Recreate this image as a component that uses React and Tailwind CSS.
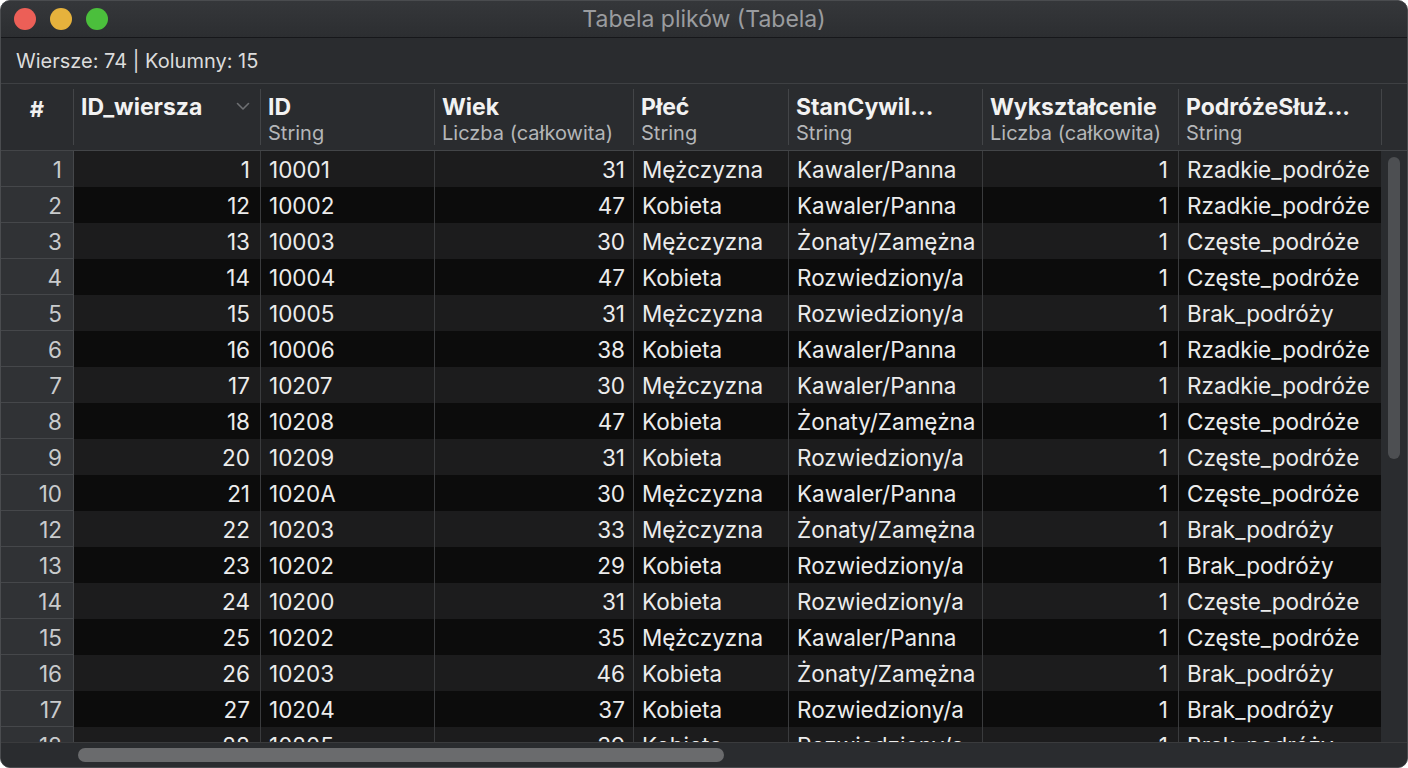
import React from "react";

const rows = [
  ["1", "1", "10001", "31", "Mężczyzna", "Kawaler/Panna", "1", "Rzadkie_podróże"],
  ["2", "12", "10002", "47", "Kobieta", "Kawaler/Panna", "1", "Rzadkie_podróże"],
  ["3", "13", "10003", "30", "Mężczyzna", "Żonaty/Zamężna", "1", "Częste_podróże"],
  ["4", "14", "10004", "47", "Kobieta", "Rozwiedziony/a", "1", "Częste_podróże"],
  ["5", "15", "10005", "31", "Mężczyzna", "Rozwiedziony/a", "1", "Brak_podróży"],
  ["6", "16", "10006", "38", "Kobieta", "Kawaler/Panna", "1", "Rzadkie_podróże"],
  ["7", "17", "10207", "30", "Mężczyzna", "Kawaler/Panna", "1", "Rzadkie_podróże"],
  ["8", "18", "10208", "47", "Kobieta", "Żonaty/Zamężna", "1", "Częste_podróże"],
  ["9", "20", "10209", "31", "Kobieta", "Rozwiedziony/a", "1", "Częste_podróże"],
  ["10", "21", "1020A", "30", "Mężczyzna", "Kawaler/Panna", "1", "Częste_podróże"],
  ["12", "22", "10203", "33", "Mężczyzna", "Żonaty/Zamężna", "1", "Brak_podróży"],
  ["13", "23", "10202", "29", "Kobieta", "Rozwiedziony/a", "1", "Brak_podróży"],
  ["14", "24", "10200", "31", "Kobieta", "Rozwiedziony/a", "1", "Częste_podróże"],
  ["15", "25", "10202", "35", "Mężczyzna", "Kawaler/Panna", "1", "Częste_podróże"],
  ["16", "26", "10203", "46", "Kobieta", "Żonaty/Zamężna", "1", "Brak_podróży"],
  ["17", "27", "10204", "37", "Kobieta", "Rozwiedziony/a", "1", "Brak_podróży"],
  ["18", "28", "10205", "39", "Kobieta", "Rozwiedziony/a", "1", "Brak_podróży"],
];

const cols = [
  { w: "w-[187px]", align: "justify-end pr-[10px]" },
  { w: "w-[174px]", align: "justify-start pl-[8px]" },
  { w: "w-[199px]", align: "justify-end pr-[8px]" },
  { w: "w-[155px]", align: "justify-start pl-[8px]" },
  { w: "w-[194px]", align: "justify-start pl-[8px]" },
  { w: "w-[196px]", align: "justify-end pr-[10px]" },
  { w: "w-[203px]", align: "justify-start pl-[8px]" },
];

const headers = [
  { name: "ID_wiersza", type: "", chevron: true },
  { name: "ID", type: "String" },
  { name: "Wiek", type: "Liczba (całkowita)" },
  { name: "Płeć", type: "String" },
  { name: "StanCywil...", type: "String" },
  { name: "Wykształcenie", type: "Liczba (całkowita)" },
  { name: "PodróżeSłuż...", type: "String" },
];

export default function App() {
  return (
    <div
      className="w-[1408px] h-[768px] flex flex-col overflow-hidden rounded-[10px] bg-[#2a2c2f] border border-[#4a4c4f]"
      style={{ fontFamily: "Inter, 'Noto Sans', sans-serif" }}
    >
      {/* Title bar */}
      <div className="h-[37px] shrink-0 relative flex items-center justify-center bg-gradient-to-b from-[#35373a] to-[#2c2e31] border-b border-[#16171a]">
        <div className="absolute left-[13px] top-[7px] flex gap-[14px]">
          <div className="w-[22px] h-[22px] rounded-full bg-[#ec5f57]" />
          <div className="w-[22px] h-[22px] rounded-full bg-[#e6b23c]" />
          <div className="w-[22px] h-[22px] rounded-full bg-[#4bbf3c]" />
        </div>
        <div className="text-[23px] text-[#9a9c9f] leading-none pt-[1px]">Tabela plików (Tabela)</div>
      </div>

      {/* Info bar */}
      <div className="h-[46px] shrink-0 flex items-center pl-[15px] border-b border-[#3e4043] bg-[#2a2c2f]">
        <span className="text-[20px] text-[#dcdcdc]">Wiersze: 74 | Kolumny: 15</span>
      </div>

      {/* Header */}
      <div className="h-[67px] shrink-0 flex border-b border-[#434548] bg-[#2a2c2f]">
        <div className="w-[73px] shrink-0 flex justify-center pt-[4px] border-r border-[#434548] my-[5px]">
          <span className="text-[22px] font-bold text-[#f0f0f0]">#</span>
        </div>
        {headers.map((h, i) => (
          <div
            key={i}
            className={`${cols[i].w} shrink-0 relative flex flex-col pl-[7px] pt-[5px] my-[5px] border-r border-[#434548]`}
          >
            <span className="text-[23px] font-bold text-[#f2f2f2] leading-[26px] whitespace-nowrap">{h.name}</span>
            <span className="text-[20px] text-[#b4b6b8] leading-[26px] whitespace-nowrap">{h.type}</span>
            {h.chevron && (
              <svg className="absolute right-[10px] top-[13px]" width="14" height="9" viewBox="0 0 14 9" fill="none">
                <path d="M1.5 1.5 L7 7 L12.5 1.5" stroke="#6e7073" strokeWidth="1.6" strokeLinecap="round" strokeLinejoin="round" />
              </svg>
            )}
          </div>
        ))}
      </div>

      {/* Body */}
      <div className="flex-1 flex min-h-0">
        <div className="w-[1380px] shrink-0 flex flex-col overflow-hidden">
          {rows.map((r, ri) => (
            <div
              key={ri}
              className={`h-[36px] shrink-0 flex text-[22.5px] ${ri % 2 === 0 ? "bg-[#1c1c1d]" : "bg-[#0c0c0c]"}`}
            >
              <div className="w-[73px] shrink-0 flex items-center justify-end pr-[11px] pt-[2px] bg-[#303235] border-r border-b border-[#45474a] text-[#c9cbcd]">
                {r[0]}
              </div>
              {r.slice(1).map((c, ci) => (
                <div
                  key={ci}
                  className={`${cols[ci].w} shrink-0 flex items-center pt-[2px] ${cols[ci].align} border-r border-[#3a3b3d] text-[#ececec] whitespace-nowrap`}
                >
                  {c}
                </div>
              ))}
            </div>
          ))}
        </div>
        <div className="flex-1 bg-[#2a2c2f] flex justify-center pt-[6px]">
          <div className="w-[12px] h-[302px] rounded-full bg-[#4d4f52]" />
        </div>
      </div>

      {/* Bottom scrollbar */}
      <div className="h-[25px] shrink-0 bg-[#2a2c2f] border-t border-[#3a3b3d] flex items-center pl-[77px]">
        <div className="w-[646px] h-[14px] rounded-full bg-[#6a6b6d]" />
      </div>
    </div>
  );
}
